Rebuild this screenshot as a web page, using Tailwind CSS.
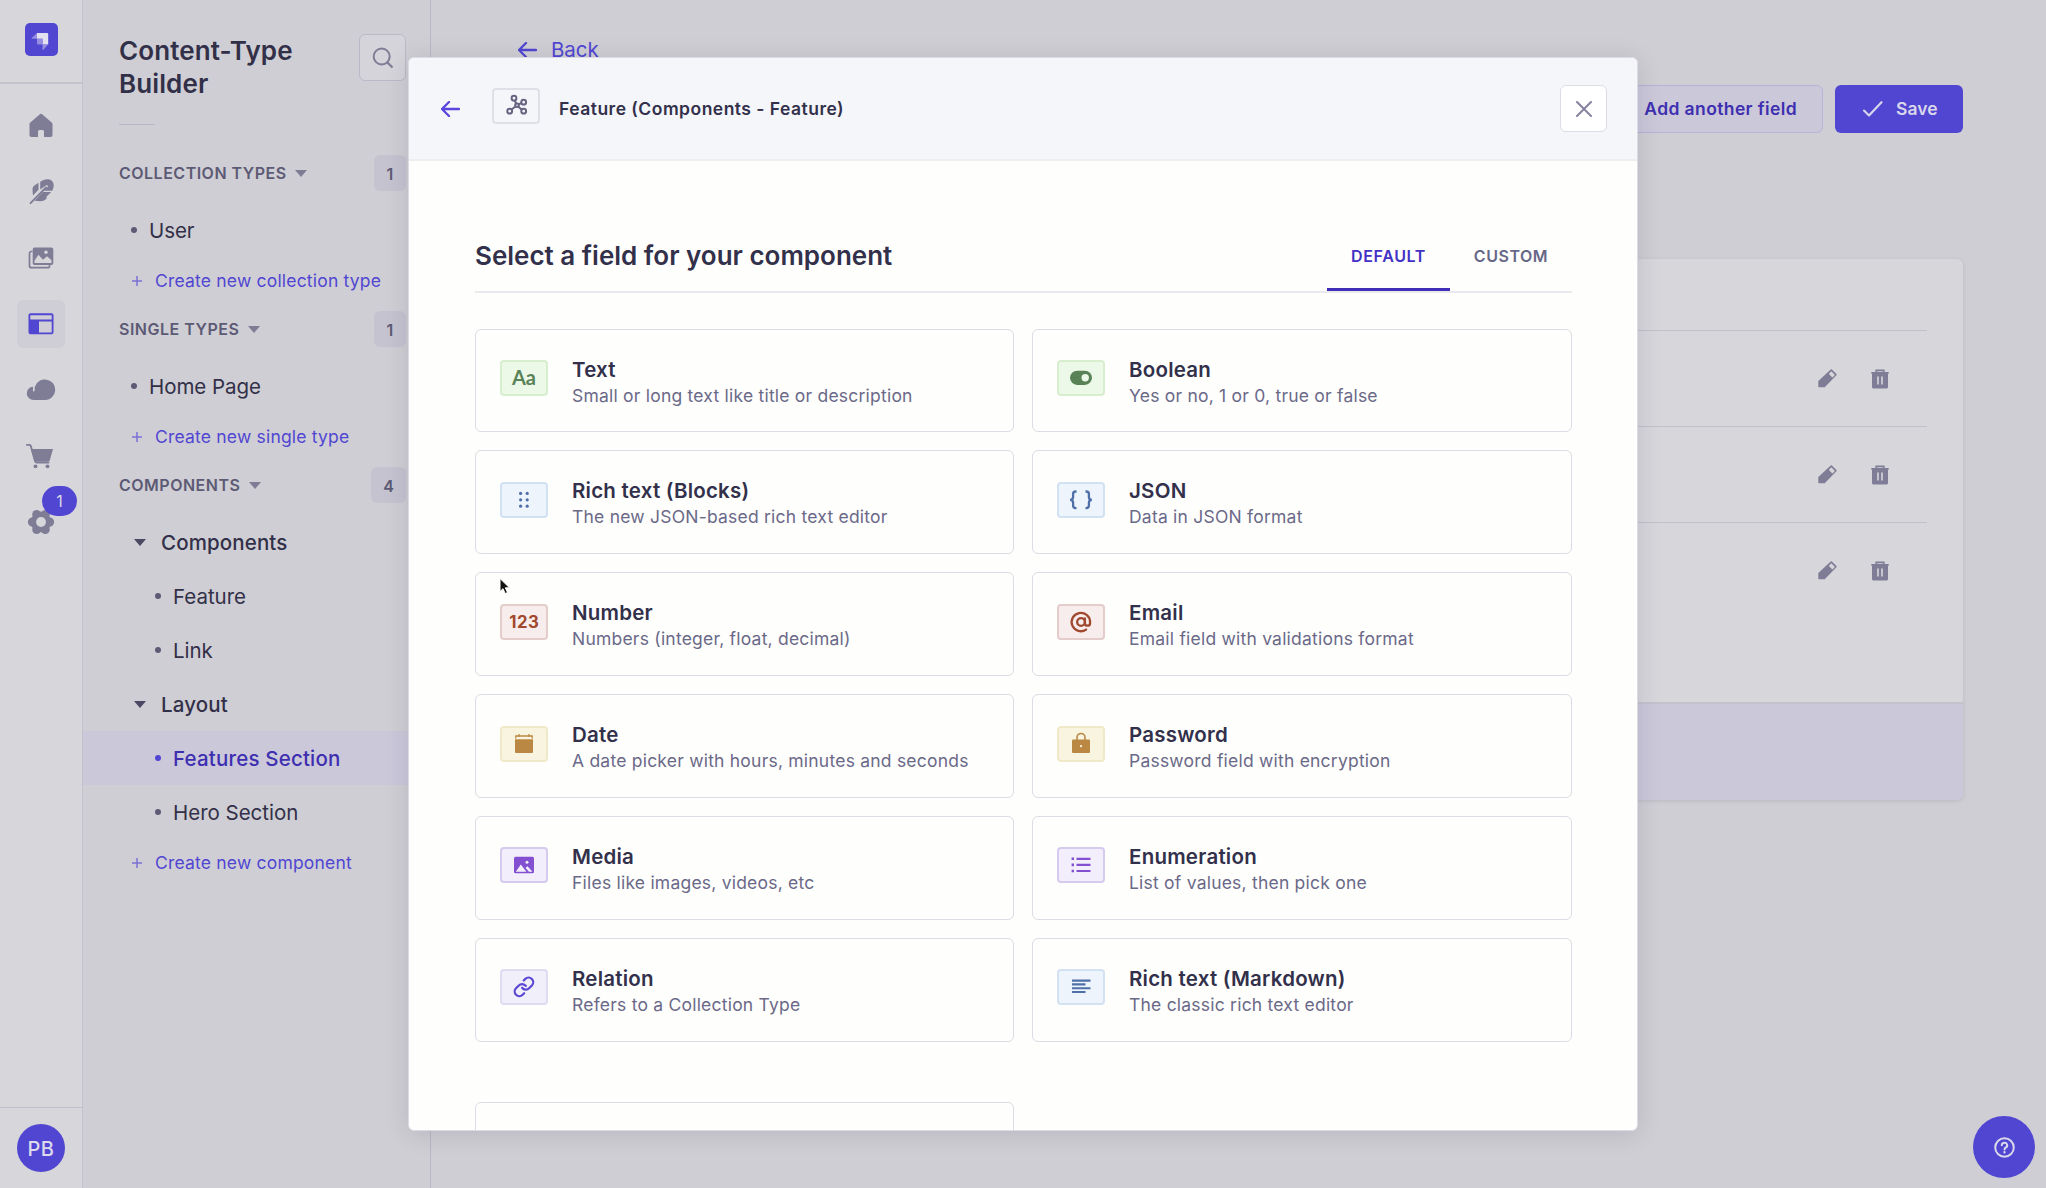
<!DOCTYPE html>
<html lang="en">
<head>
<meta charset="utf-8">
<title>Content-Type Builder</title>
<script src="https://cdn.jsdelivr.net/npm/@tailwindcss/browser@4"></script>
</head>
<body class="overflow-hidden bg-[#cfced4] font-[Inter,sans-serif] text-[#323048]">
<div class="relative flex h-[1188px] w-[2046px] overflow-hidden">

  <!-- Main navigation -->
  <nav class="flex w-[83px] shrink-0 flex-col border-r border-[#c3c1cd] bg-[#d7d6db] text-[#7f7c96]">
    <div class="flex h-[84px] items-start justify-center border-b-2 border-[#c4c3cd] pt-[23px]">
      <svg class="h-[33px] w-[33px]" viewBox="24.5 23 33 33"><rect x="24.5" y="23" width="33" height="33" rx="5" fill="#5146d2"/><path d="M36.5 33h10.2a1 1 0 0 1 1 1v10.5H42v-5.8h-5.5z" fill="#e3e0f0"/><path d="M36.5 38.7H42v5.8h-4.5a1 1 0 0 1-1-1z" fill="#958ee0"/><path d="M36.5 33v5.7h-4.7a.5.5 0 0 1-.4-.9zM42 44.5h5.5L42.8 50a.5.5 0 0 1-.8-.4z" fill="#958ee0"/></svg>
    </div>
    <div class="flex flex-col items-center gap-[18px] pt-[18px]">
      <svg class="h-12 w-12" viewBox="17 102 48 48"><path d="M39.6 114.5a2 2 0 0 1 2.8 0l9.3 8a2.400 2.400 0 0 1 .8 1.800V135a2 2 0 0 1-2 2H44v-5.500a1.500 1.500 0 0 0-1.500-1.500h-3a1.500 1.500 0 0 0-1.500 1.500v5.500h-6.500a2 2 0 0 1-2-2v-10.700a2.400 2.400 0 0 1 .8-1.800z" fill="currentColor"/></svg>
      <svg class="h-12 w-12" viewBox="17 168 48 48"><path d="M38.500 182.800v7l-5.600 5.600-.4-6.400q0-2 1.500-3.200zM40.200 189.500v-7.800q3.500-3 8-2.500 5 .6 5.500 5.800.1 3-1.500 5.700h-8.500l4.500-4.400-1.400-1.300zM42.800 192h8.400l-5 5q1 .8 0 2-2.500 2.400-6 2.300l-5.700-.5z" fill="currentColor"/><path d="M30.500 203.200 46 187.500" stroke="currentColor" stroke-width="1.800" stroke-linecap="round"/></svg>
      <svg class="h-12 w-12" viewBox="17 234 48 48"><path d="M49.500 265v1.500a1.500 1.500 0 0 1-1.500 1.200H31.500a2 2 0 0 1-2-2V253a1.700 1.700 0 0 1 1.500-1.500h1.500" fill="none" stroke="currentColor" stroke-width="1.700"/><path fill-rule="evenodd" d="M34.500 247.500h17a1.800 1.800 0 0 1 1.800 1.800v13.900a1.800 1.800 0 0 1-1.800 1.800h-17a1.800 1.800 0 0 1-1.800-1.800v-13.900a1.800 1.800 0 0 1 1.800-1.800zM34.500 260.500v2.500h17v-2.800l-4.500-4-4 3.500-4.500-5zM46 250.500a1.800 1.800 0 1 0 0 3.600 1.800 1.800 0 0 0 0-3.600z" fill="currentColor"/></svg>
      <div class="h-12 w-12 rounded-md bg-[#cfcdd6] text-[#5146d2]"><svg class="h-12 w-12" viewBox="17 300 48 48"><path fill-rule="evenodd" d="M30.500 313.300h21a2 2 0 0 1 2 2v17a2 2 0 0 1-2 2h-21a2 2 0 0 1-2-2v-17a2 2 0 0 1 2-2zM30.300 315.200v4.300h21.400v-4.300zM39 321.500v10.900h12.700v-10.900z" fill="currentColor"/></svg></div>
      <svg class="h-12 w-12" viewBox="17 366 48 48"><path d="M33.500 400a6.700 6.700 0 0 1-1.200-13.300q.8 0 .8 1a13 13 0 0 0-.1 3 .8.800 0 0 0 1.600 0A10.300 10.300 0 1 1 45 400z" fill="currentColor"/></svg>
      <svg class="h-12 w-12" viewBox="17 432 48 48"><path d="M27 444.900h2.500q1 0 1.300 1l4.200 15q.5 1.700 2 1.700h11.500" fill="none" stroke="currentColor" stroke-width="1.900" stroke-linecap="round" stroke-linejoin="round"/><path d="M31 449h22l-3.300 11.500q-.4 1.300-1.700 1.300H36q-1.200 0-1.600-1.300z" fill="currentColor"/><circle cx="35.500" cy="466.300" r="1.900" fill="currentColor"/><circle cx="47.500" cy="466.300" r="1.900" fill="currentColor"/></svg>
      <div class="relative h-12 w-12">
        <svg class="h-12 w-12" viewBox="17 498 48 48"><g fill="currentColor"><circle cx="41" cy="522" r="10.300"/><circle cx="49.600" cy="522" r="4.500"/><circle cx="32.400" cy="522" r="4.500"/><circle cx="45.300" cy="514.500" r="4.500"/><circle cx="36.700" cy="514.500" r="4.500"/><circle cx="45.300" cy="529.500" r="4.500"/><circle cx="36.700" cy="529.500" r="4.500"/></g><circle cx="41" cy="522" r="4.900" fill="#d7d6db"/></svg>
        <span class="absolute -top-3 left-[25px] flex h-[30px] w-[35px] items-center justify-center rounded-[15px] bg-[#5146d2] text-base text-[#d9d7ea]">1</span>
      </div>
    </div>
    <div class="mt-auto flex h-[81px] items-start justify-center border-t border-[#c0becb] pt-4">
      <span class="flex h-12 w-12 items-center justify-center rounded-full bg-[#5146d2] pt-px text-[20px] font-medium tracking-[0.02em] text-[#dcdaec]">PB</span>
    </div>
  </nav>

  <!-- Content types -->
  <aside class="flex w-[348px] shrink-0 flex-col border-r border-[#b9b7c4]">
    <div class="flex items-start justify-between pt-[34px] pr-6 pl-9">
      <h1 class="w-[200px] text-[26px] leading-[33px] font-semibold tracking-[0.004em]">Content-Type Builder</h1>
      <span class="flex h-[47px] w-[47px] items-center justify-center rounded-md border border-[#bbb9c8] bg-[#d5d4da]"><svg class="h-[22px] w-[22px] text-[#7f7c96]" viewBox="0 0 22 22" fill="none" stroke="currentColor" stroke-width="2"><circle cx="9.700" cy="9.500" r="8"/><path d="m15.500 15.500 5 5" stroke-width="2.200"/></svg></span>
    </div>
    <div class="mt-6 ml-9 h-px w-9 bg-[#b9b7c6]"></div>
    <div id="types" class="mt-[30px] flex flex-col"></div>
  </aside>

  <!-- Page -->
  <main class="flex flex-1 flex-col pr-[83px] pl-[83px] pt-[35px]">
    <a class="flex h-[29px] items-center gap-[14px] pl-1 text-[20.5px] tracking-[-0.004em] text-[#5146d2]"><svg class="h-4 w-[19px]" viewBox="0 0 19 16" fill="none" stroke="currentColor" stroke-width="2.300" stroke-linecap="round" stroke-linejoin="round"><path d="M18 8H1M8 1 1 8l7 7"/></svg><span class="pt-[2px]">Back</span></a>
    <div class="mt-[21px] flex h-12 justify-end gap-3">
      <button class="flex w-[226px] items-center justify-end rounded-md border border-[#b6b2d8] bg-[#cbc8da] pr-[25px] text-[17.5px] font-semibold tracking-[0.022em] whitespace-nowrap text-[#3d2fb0]">Add another field</button>
      <button class="flex w-32 items-center rounded-md bg-[#5146d2] pl-[28px] text-[17.5px] font-semibold tracking-[0.005em] text-[#d9d7ea]"><svg class="mr-[13px] h-4 w-5" viewBox="0 0 20 16" fill="none" stroke="currentColor" stroke-width="2.100" stroke-linecap="round" stroke-linejoin="round"><path d="m1 9.500 5 5L18.500 1.200"/></svg>Save</button>
    </div>
    <section class="mt-[126px] flex h-[541px] flex-col overflow-hidden rounded-md bg-[#d7d6db] shadow-[0_1px_4px_rgba(33,33,52,0.12)]">
      <div class="mx-9 h-[71px]"></div>
      <div id="rows" class="mx-9 flex flex-col"></div>
      <div class="mt-auto h-[98px] border-t-2 border-[#c4c2cd] bg-[#cbc8da]"></div>
    </section>
  </main>

  <!-- Help -->
  <span class="absolute top-[1116px] left-[1973px] flex h-[62px] w-[62px] items-center justify-center rounded-full bg-[#5146d2]"><svg class="h-[21px] w-[21px]" viewBox="0 0 21 21" fill="none" stroke="#d9d7ea" stroke-width="2"><circle cx="10.500" cy="10.500" r="9.300"/><path d="M7.800 8.300a2.700 2.500 0 1 1 4 2.200q-1.300.7-1.300 1.900" stroke-linecap="round"/><circle cx="10.500" cy="15.300" r=".6" fill="#d9d7ea" stroke-width="1.200"/></svg></span>

  <!-- Dialog -->
  <div role="dialog" class="absolute top-[57px] left-[408px] flex h-[1074px] w-[1230px] flex-col overflow-hidden rounded-md border border-[#dcdbe4] bg-[#fefefd] shadow-[0_3px_24px_rgba(33,33,52,0.13)]">
    <header class="flex h-[103px] shrink-0 items-center border-b-2 border-[#eeeef1] bg-[#f5f6fa] pl-8 pr-[30px]">
      <svg class="h-4 w-[19px] text-[#5a46dc]" viewBox="0 0 19 16" fill="none" stroke="currentColor" stroke-width="2.300" stroke-linecap="round" stroke-linejoin="round"><path d="M18 8H1M8 1 1 8l7 7"/></svg>
      <span class="mb-[6px] ml-[32px] h-9 w-12 rounded-[4px] border-2 border-[#dfdfe7]"><svg class="-mt-[2px] -ml-[2px] h-9 w-12 max-w-none" viewBox="492 88.500 48 36" fill="none" stroke="#666480" stroke-width="2"><circle cx="514" cy="98.700" r="2.400"/><circle cx="523.700" cy="102.700" r="2.400"/><circle cx="509.700" cy="111.700" r="2.400"/><circle cx="523.700" cy="111.700" r="2.400"/><circle cx="517" cy="105.700" r="1.800"/><path d="m514.800 101 1.300 3M521.500 103.500l-2.700 1.400M511.500 110l4-3M521.800 110.300l-3.300-3"/></svg></span>
      <h2 class="ml-[19px] pt-[2px] text-[17.500px] font-semibold tracking-[0.0275em] text-[#32304a]">Feature (Components - Feature)</h2>
      <span class="ml-auto flex h-[47px] w-[47px] items-center justify-center rounded-md border border-[#dcdce4] bg-white"><svg class="h-4 w-4" viewBox="0 0 16 16" stroke="#8583a0" stroke-width="2" stroke-linecap="round"><path d="m1 1 14 14M15 1 1 15"/></svg></span>
    </header>
    <div class="mr-[65px] ml-[66px] flex h-[132px] shrink-0 items-end border-b-2 border-[#e9e9ee]">
      <h3 class="pb-[17px] text-[26px] leading-9 font-semibold text-[#32304a]">Select a field for your component</h3>
      <div class="ml-auto flex h-[71px] text-base font-semibold">
        <span class="flex w-[123px] items-center justify-center border-b-[3px] border-[#3f2fb8] pt-[4px] tracking-[0.04em] text-[#4330c4]">DEFAULT</span>
        <span class="flex w-[122px] items-center justify-center pt-px tracking-[0.033em] text-[#666687]">CUSTOM</span>
      </div>
    </div>
    <div id="fields" class="mr-[65px] ml-[66px] mt-[35.600px] grid grid-cols-[539px_540px] gap-x-[18px] gap-y-[18.300px]"></div>
    <div class="mr-[65px] ml-[66px] mt-[60.400px] grid grid-cols-[539px_540px] gap-x-[18px]"><div class="h-[103.600px] rounded-md border border-[#dcdce4]"></div></div>
  </div>

  <!-- Pointer -->
  <svg class="absolute top-[577px] left-[498px] h-[19px] w-[14px]" viewBox="0 0 14 19"><path d="M2 1.500v13l3-2.800 2.200 4.800 2.300-1-2.200-4.700h4.200z" fill="#111" stroke="#fff" stroke-width="1"/></svg>
</div>

<script>
const caret = '<svg class="h-[7px] w-3" viewBox="0 0 12 7"><path d="M0 0h12L6 7z" fill="currentColor"/></svg>';
const head = (t, n, w) => `<div class="flex h-9 items-center pl-9 pr-6 text-[#5c5a74]"><span class="text-base font-semibold tracking-[0.031em]">${t}</span><span class="ml-[8.500px] text-[#7f7c96]">${caret}</span><span class="${w} ml-auto flex h-9 items-center justify-center rounded-md bg-[#c5c3d0] pt-px text-base font-semibold">${n}</span></div>`;
const dot = '<span class="h-[6px] w-[6px] rounded-full bg-[#5c5a74]"></span>';
const item = t => `<div class="flex h-[54px] items-center pl-12 text-[20.5px] tracking-[-0.003em]">${dot}<span class="ml-3 pt-[2px]">${t}</span></div>`;
const sub = t => `<div class="flex h-[54px] items-center pl-[72px] text-[20.5px] tracking-[-0.001em]">${dot}<span class="ml-3 pt-[2px]">${t}</span></div>`;
const active = t => `<div class="flex h-[54px] items-center bg-[#cbc8da] pl-[72px] text-[20.5px] font-medium tracking-[0.009em] text-[#3d2fb0]"><span class="h-[6px] w-[6px] rounded-full bg-[#5146d2]"></span><span class="ml-3 pt-[2px]">${t}</span></div>`;
const group = t => `<div class="flex h-[54px] items-center pl-[51px] text-[20.5px] font-medium tracking-[0.006em]"><span class="text-[#4a4863]">${caret}</span><span class="ml-[15px] pt-[2px]">${t}</span></div>`;
const create = t => `<div class="mb-[6px] flex h-12 items-center pl-[49px] text-[17.5px] tracking-[0.011em] text-[#5146d2]"><svg class="h-[10px] w-[10px]" viewBox="0 0 10 10"><path d="M5 0v10M0 5h10" stroke="#7a72d6" stroke-width="1.500"/></svg><span class="ml-[13px]">${t}</span></div>`;
const gap = '<div class="h-3"></div>';
document.getElementById('types').innerHTML =
  head('COLLECTION TYPES', 1, 'w-8') + gap + item('User') + create('Create new collection type') +
  head('SINGLE TYPES', 1, 'w-8') + gap + item('Home Page') + create('Create new single type') +
  head('COMPONENTS', 4, 'w-[35px]') + gap + group('Components') + sub('Feature') + sub('Link') +
  group('Layout') + active('Features Section') + sub('Hero Section') + create('Create new component');

const actions = `<svg class="h-[19px] w-[19px]" viewBox="0 0 19 19"><path fill-rule="evenodd" d="M12.700.6q.6-.6 1.200 0l4.500 4.500q.6.600 0 1.200L6.700 18.200H1q-.7 0-.7-.7v-5.200q0-.3.300-.6zM13.300 2.300l-2.500 2.600 3.600 3.600 2.500-2.600z" fill="currentColor"/></svg>
<svg class="ml-[34px] h-5 w-[18px]" viewBox="0 0 18 20"><path d="M5.200 3.200V1.400h7.600v1.800" fill="none" stroke="currentColor" stroke-width="1.600"/><path fill-rule="evenodd" d="M.3 2.900h17.400v1.900H17V18a1.500 1.500 0 0 1-1.500 1.500h-13A1.500 1.500 0 0 1 1 18V4.800H.3zM6.200 7.500v8h1.600v-8zM10.200 7.500v8h1.600v-8z" fill="currentColor"/></svg>`;
document.getElementById('rows').innerHTML = Array(3).fill(`<div class="flex h-24 items-center justify-end border-t border-[#c1bfca] pr-[38px] text-[#7f7c96]">${actions}</div>`).join('');

const green = 'border-[#d8efcf] bg-[#ecf9e9] text-[#5a8257]';
const blue = 'border-[#d3e2f2] bg-[#eef4fb] text-[#4f6fa8]';
const red = 'border-[#e3ccc9] bg-[#f7edec] text-[#a1492f]';
const gold = 'border-[#f0e9c8] bg-[#f8f4df] text-[#ba8843]';
const violet = 'border-[#d6caef] bg-[#f3eefc] text-[#8250d0]';
const indigo = 'border-[#dedcf0] bg-[#f0effa] text-[#5b48d4]';
const fields = [
  ['Text', 'Small or long text like title or description', green, '<text x="24" y="25" text-anchor="middle" font-family="Lato, sans-serif" font-weight="700" font-size="20" fill="currentColor" stroke="none">Aa</text>'],
  ['Boolean', 'Yes or no, 1 or 0, true or false', green, '<rect x="13" y="10.700" width="22" height="14.200" rx="7.100" fill="currentColor" stroke="none"/><circle cx="28.200" cy="17.800" r="3.700" fill="#ecf9e9" stroke="none"/>'],
  ['Rich text (Blocks)', 'The new JSON-based rich text editor', blue, '<g fill="currentColor" stroke="none"><circle cx="20.600" cy="11.400" r="1.600"/><circle cx="27.200" cy="11.400" r="1.600"/><circle cx="20.600" cy="17.800" r="1.600"/><circle cx="27.200" cy="17.800" r="1.600"/><circle cx="20.600" cy="24.200" r="1.600"/><circle cx="27.200" cy="24.200" r="1.600"/></g>'],
  ['JSON', 'Data in JSON format', blue, '<path d="M19.500 9.500h-.8q-2.600 0-2.600 2.500v3q0 2.800-3 2.800 3 0 3 2.800v3q0 2.500 2.600 2.500h.8M28.500 9.500h.8q2.600 0 2.600 2.500v3q0 2.800 3 2.800-3 0-3 2.800v3q0 2.500-2.600 2.500h-.8" stroke-width="2.300"/>'],
  ['Number', 'Numbers (integer, float, decimal)', red, '<text x="24.300" y="24" text-anchor="middle" font-family="Inter, sans-serif" font-weight="700" font-size="16.800" letter-spacing=".5" fill="currentColor" stroke="none">123</text>'],
  ['Email', 'Email field with validations format', red, '<g transform="translate(13 7) scale(.92)" stroke-width="2.500" stroke-linecap="round"><circle cx="12" cy="12" r="4.200"/><path d="M16.200 8v5.200a2.800 2.800 0 0 0 5.600 0V12a10 10 0 1 0-4.300 8.200"/></g>'],
  ['Date', 'A date picker with hours, minutes and seconds', gold, '<path d="M15.800 12.500V10h16.400v2.500M19 8v3M29 8v3" stroke-width="1.300"/><path d="M15 13.300h18V26a1 1 0 0 1-1 1H16a1 1 0 0 1-1-1z" fill="currentColor" stroke="none"/>'],
  ['Password', 'Password field with encryption', gold, '<path d="M20 14v-2.500a4 4 0 0 1 8 0V14" stroke-width="1.600"/><rect x="15" y="13.500" width="18" height="13.500" rx="1" fill="currentColor" stroke="none"/><circle cx="24" cy="20.200" r="1.100" fill="#f8f4df" stroke="none"/>'],
  ['Media', 'Files like images, videos, etc', violet, '<rect x="14" y="9.700" width="20" height="16.600" rx="1.500" fill="currentColor" stroke="none"/><path d="m15.800 24.800 5-7.300 5.600 7.300zM25.500 20.800l2-1.600 5 5.600h-3.600z" fill="#f3eefc" stroke="none"/><circle cx="27" cy="15.200" r="1.500" fill="#f3eefc" stroke="none"/>'],
  ['Enumeration', 'List of values, then pick one', violet, '<path d="M19.500 11.800h14M19.500 17.900h14M19.500 24h14" stroke-width="2.200"/><path d="M14.600 11.800H17M14.600 17.900H17M14.600 24H17" stroke-width="2.600"/>'],
  ['Relation', 'Refers to a Collection Type', indigo, '<g transform="translate(12.800 6.700) scale(.93)" stroke-width="2.400" stroke-linecap="round"><path d="M10 13a5 5 0 0 0 7.540.540l3-3a5 5 0 0 0-7.070-7.070l-1.720 1.710"/><path d="M14 11a5 5 0 0 0-7.540-.540l-3 3a5 5 0 0 0 7.070 7.070l1.710-1.710"/></g>'],
  ['Rich text (Markdown)', 'The classic rich text editor', blue, '<path d="M15 11.600h18.500M15 15.400h13.500M15 19.200h18.500M15 23h13.500" stroke-width="2.100"/>'],
];
document.getElementById('fields').innerHTML = fields.map(([t, d, c, i]) => `<div class="flex h-[103.600px] items-center rounded-md border border-[#dcdce4] pl-6">
  <span class="mb-[5px] h-9 w-12 shrink-0 rounded-[4px] border-2 ${c}"><svg class="-mt-[2px] -ml-[2px] h-9 w-12 max-w-none" viewBox="0 0 48 36" fill="none" stroke="currentColor">${i}</svg></span>
  <span class="ml-6 flex flex-col pt-[2.400px]"><b class="text-[20.5px] leading-7 font-semibold tracking-[0.011em] text-[#32304a]">${t}</b><span class="text-[17.5px] leading-6 tracking-[0.0125em] text-[#6b6988]">${d}</span></span>
</div>`).join('');
</script>
</body>
</html>
